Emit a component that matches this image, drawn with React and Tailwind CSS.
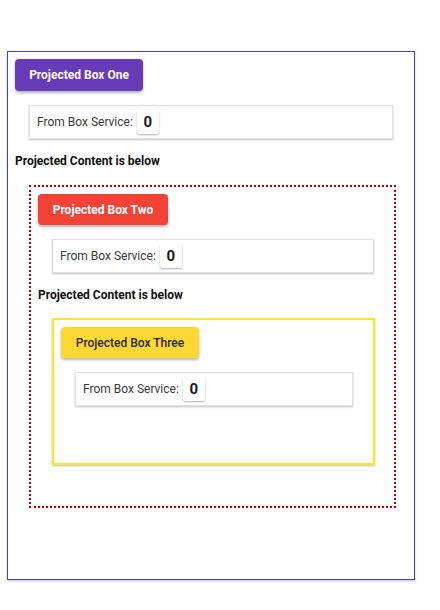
import React from "react";

const font = { fontFamily: "Roboto, 'Liberation Sans', sans-serif" };

function ServiceCard({ className }) {
  return (
    <div className={"mt-[14px] h-[34px] flex items-center bg-white border border-[#e2e2e2] shadow-[0_1px_2px_rgba(0,0,0,0.25)] " + className}>
      <span className="ml-[7px] text-[12px] text-[#3a3a3a]">From Box Service:</span>
      <span className="ml-[4px] w-[22px] h-[24px] flex items-center justify-center bg-white text-[15px] font-bold text-[#1a1a1a] shadow-[0_1px_2px_rgba(0,0,0,0.3)] rounded-[2px]">0</span>
    </div>
  );
}

function Heading() {
  return (
    <div className="mt-[14px] h-[16px] leading-[16px] text-[12px] font-bold text-[#111]">
      Projected Content is below
    </div>
  );
}

export default function App() {
  return (
    <div className="w-[440px] h-[610px] bg-white pt-[51px] pl-[7px]" style={font}>
      <div className="w-[408px] h-[529px] border border-[#4646a8] shadow-[0_1px_2px_rgba(60,60,160,0.35)] px-[7px] pt-[7px]">
        <button className="w-[128px] h-[32px] rounded-[4px] bg-[#673ab7] text-white text-[12px] font-bold shadow-[0_2px_3px_rgba(0,0,0,0.3)]">
          Projected Box One
        </button>
        <ServiceCard className="mx-[14px]" />
        <Heading />
        <div className="mt-[16px] ml-[14px] mr-[11px] h-[323px] border-2 border-dotted border-[#b40000] px-[7px] pt-[7px]">
          <button className="w-[130px] h-[31px] rounded-[4px] bg-[#f44336] text-white text-[12px] font-bold shadow-[0_2px_3px_rgba(0,0,0,0.3)]">
            Projected Box Two
          </button>
          <ServiceCard className="ml-[14px] mr-[13px]" />
          <Heading />
          <div className="mt-[15px] ml-[14px] mr-[12px] h-[147px] border-2 border-[#f7ec1f] shadow-[0_1px_2px_rgba(0,0,0,0.25)] px-[7px] pt-[7px]">
            <button className="w-[138px] h-[31px] rounded-[4px] bg-[#fdd835] text-[#2a2a2a] text-[12px] font-medium shadow-[0_2px_3px_rgba(0,0,0,0.3)]">
              Projected Box Three
            </button>
            <ServiceCard className="ml-[14px] mr-[13px]" />
          </div>
        </div>
      </div>
    </div>
  );
}
